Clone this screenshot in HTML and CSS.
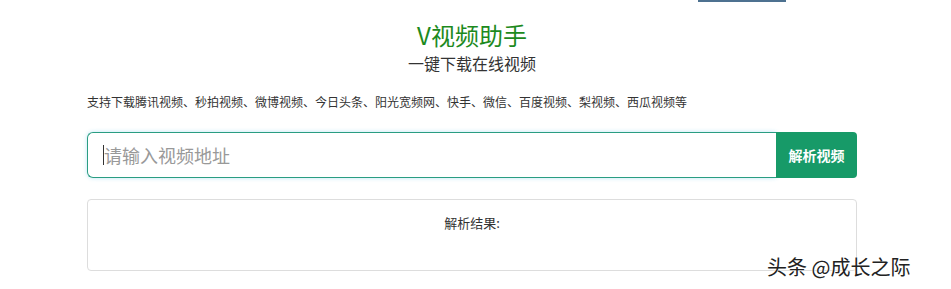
FILE: index.html
```html
<!DOCTYPE html>
<html lang="zh">
<head>
<meta charset="utf-8">
<link rel="stylesheet" href="styles.css">
</head>
<body>
<div class="topbar"></div>
<div class="wrap">
  <h1 class="title">V视频助手</h1>
  <div class="subtitle">一键下载在线视频</div>
  <p class="support">支持下载腾讯视频、秒拍视频、微博视频、今日头条、阳光宽频网、快手、微信、百度视频、梨视频、西瓜视频等</p>
  <div class="search">
    <div class="input"><span class="caret"></span><span class="ph">请输入视频地址</span></div>
    <button class="btn">解析视频</button>
  </div>
  <div class="result">解析结果:</div>
</div>
<div class="watermark">头条 @成长之际</div>
</body>
</html>
```
FILE: styles.css
```css
html, body { margin: 0; padding: 0; background: #fff; }
body {
  font-family: "Microsoft YaHei", "Noto Sans CJK SC", "Liberation Sans", sans-serif;
  color: #333;
  width: 951px;
  height: 289px;
  overflow: hidden;
  position: relative;
}
.topbar {
  position: absolute;
  left: 698px;
  top: 0;
  width: 88px;
  height: 2px;
  background: #4d7190;
}
.wrap {
  width: 770px;
  margin-left: 87px;
  padding-top: 18px;
}
.title {
  margin: 0;
  text-align: center;
  font-size: 24px;
  font-weight: normal;
  color: #1d8a1d;
  line-height: 34px;
}
.subtitle {
  text-align: center;
  font-size: 16px;
  line-height: 22px;
  color: #333;
}
.support {
  margin: 20px 0 0 0;
  font-size: 12px;
  line-height: 16px;
  color: #333;
}
.search {
  display: flex;
  margin-top: 22px;
  height: 46px;
}
.input {
  flex: 1;
  box-sizing: border-box;
  border: 1px solid #2a9d82;
  border-right: none;
  border-radius: 6px 0 0 6px;
  box-shadow: 0 0 4px rgba(102, 200, 233, 0.45);
  display: flex;
  align-items: center;
  padding-left: 15px;
}
.caret {
  display: inline-block;
  width: 1px;
  height: 20px;
  background: #333;
}
.ph {
  font-size: 18px;
  color: #999;
}
.btn {
  width: 81px;
  border: none;
  border-radius: 0 4px 4px 0;
  background: #179a68;
  color: #fff;
  font-family: inherit;
  font-size: 14px;
  font-weight: bold;
  padding: 0;
}
.result {
  margin-top: 21px;
  height: 72px;
  box-sizing: border-box;
  border: 1px solid #ddd;
  border-radius: 4px;
  text-align: center;
  padding-top: 13px;
  font-size: 13px;
  color: #333;
}
.watermark {
  position: absolute;
  left: 767px;
  top: 252px;
  font-size: 20px;
  color: #222;
  text-shadow: 0 0 2px #fff, 0 0 2px #fff;
}
```
